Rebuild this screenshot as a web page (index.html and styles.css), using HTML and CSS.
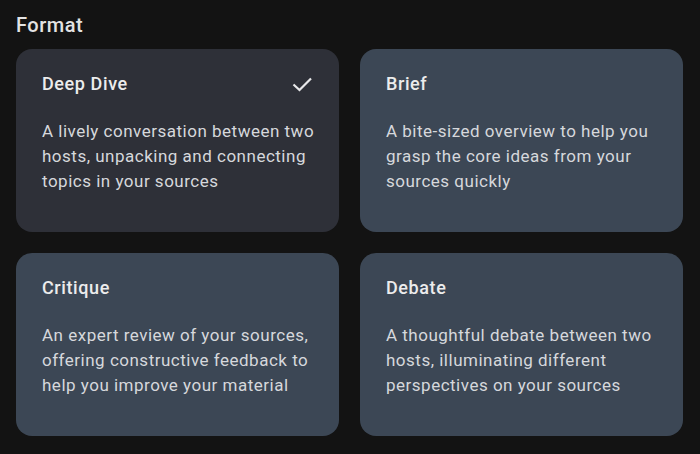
FILE: index.html
```html
<!DOCTYPE html>
<html>
<head>
<meta charset="utf-8">
<link rel="stylesheet" href="styles.css">
</head>
<body>
<div class="panel">
  <h2 class="heading">Format</h2>
  <div class="grid">
    <div class="card selected">
      <div class="card-head">
        <span class="title">Deep Dive</span>
        <svg class="check" width="24" height="24" viewBox="0 0 24 24"><polyline points="3.5,12.5 9.5,18 21,6.5" fill="none" stroke="#e8e8ea" stroke-width="2.2"/></svg>
      </div>
      <p class="desc">A lively conversation between two hosts, unpacking and connecting topics in your sources</p>
    </div>
    <div class="card">
      <div class="card-head"><span class="title">Brief</span></div>
      <p class="desc">A bite-sized overview to help you grasp the core ideas from your sources quickly</p>
    </div>
    <div class="card">
      <div class="card-head"><span class="title">Critique</span></div>
      <p class="desc">An expert review of your sources, offering constructive feedback to help you improve your material</p>
    </div>
    <div class="card">
      <div class="card-head"><span class="title">Debate</span></div>
      <p class="desc">A thoughtful debate between two hosts, illuminating different perspectives on your sources</p>
    </div>
  </div>
</div>
</body>
</html>
```
FILE: styles.css
```css
html, body {
  margin: 0;
  padding: 0;
  background: #131313;
  height: 100%;
}
body {
  font-family: Roboto, "Noto Sans", sans-serif;
  color: #e3e3e3;
}
.panel {
  padding: 13px 17px 0 16px;
}
.heading {
  margin: 0 0 12px 0;
  font-size: 20px;
  line-height: 24px;
  font-weight: 500;
  letter-spacing: 0.5px;
  color: #e3e3e3;
}
.grid {
  display: grid;
  grid-template-columns: 1fr 1fr;
  grid-auto-rows: 183px;
  gap: 21px;
}
.card {
  background: #3c4755;
  border-radius: 16px;
  padding: 23px 16px 0 26px;
  box-sizing: border-box;
}
.card.selected {
  background: #2e3038;
}
.card-head {
  display: flex;
  justify-content: space-between;
  align-items: center;
  height: 24px;
}
.title {
  font-size: 18px;
  line-height: 24px;
  font-weight: 500;
  letter-spacing: 0.6px;
  color: #ececec;
}
.check {
  margin-right: 9px;
}
.desc {
  margin: 23px 0 0 0;
  font-size: 17px;
  line-height: 25px;
  letter-spacing: 0.5px;
  color: #d6d8dc;
}
```
